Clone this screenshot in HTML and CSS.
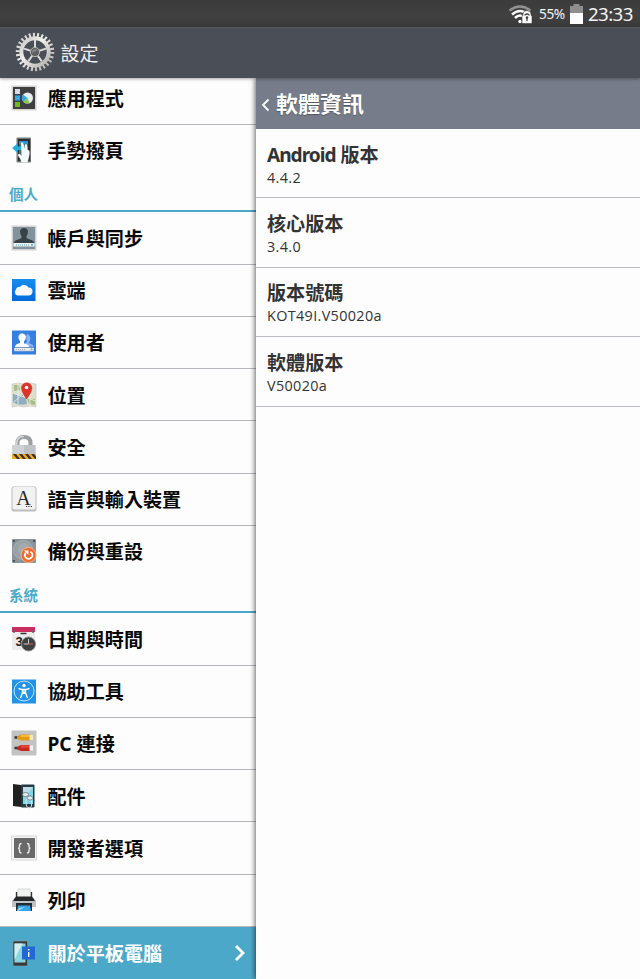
FILE: index.html
```html
<!DOCTYPE html>
<html lang="zh-Hant">

<head>
    <meta charset="UTF-8">
    <meta name="viewport" content="width=device-width, initial-scale=1.0">
    <title>設定</title>
    <link rel="stylesheet" href="styles.css">
</head>

<body>
    <div class="status-bar">
        <svg class="wifi" width="25" height="20" viewBox="0 0 25 20" fill="none">
            <path d="M1.5 5.5Q12 -2.5 22.5 5.5" stroke="#929292" stroke-width="2.4" />
            <path d="M4 9.5Q12 2.500 20 9.500M7 13Q12 8 17 13" stroke="#fff" stroke-width="2.5" />
            <circle cx="12" cy="16.5" r="1.7" fill="#fff" />
            <path d="M14 10.5h1V9a4 3.5 0 0 1 8 0v1.5h1v8H14z" fill="#fff" stroke="#3d3d3d" stroke-width=".6" />
            <path d="M17 10.500V10q2-2 4 0v.5M19 12v4" stroke="#444" stroke-width="1.3" />
            <circle cx="19" cy="12.5" r="1.3" fill="#444" />
        </svg>
        <span class="percent">55%</span>
        <svg class="battery" width="13" height="21" viewBox="0 0 13 21">
            <path d="M0 2h3.5V0h6v2H13v7H0z" fill="#8e8e8e" />
            <path d="M0 9h13v11H0z" fill="#fff" />
        </svg>
        <span class="clock">23:33</span>
    </div>

    <header class="app-bar">
        <svg class="gear" width="42" height="42" viewBox="0 0 42 42" fill="none">
            <defs>
                <linearGradient id="metal" x1="0" y1="0" x2="1" y2="1">
                    <stop offset="0" stop-color="#c4c4c2" />
                    <stop offset=".4" stop-color="#f1f0ed" />
                    <stop offset="1" stop-color="#aeada9" />
                </linearGradient>
            </defs>
            <g stroke="url(#metal)">
                <circle cx="21" cy="21" r="17" stroke-width="4.5" pathLength="52" stroke-dasharray=".95 1.05" />
                <circle cx="21" cy="21" r="13.7" stroke-width="4" />
                <path d="M21 20V9M21.5 21L32 17.6M21.5 21.5l6.300 8.900M20.500 21.500l-6.300 8.900M20.500 21L10 17.600" stroke-width="2" stroke="#dcdbd8" />
            </g>
            <circle cx="21" cy="21" r="4.600" fill="#5d5f62" stroke="#b9b8b5" stroke-width="1" />
            <path d="M18 22a3.300 3.300 0 0 1 5.500-3z" fill="#85878a" />
        </svg>
        <h1>設定</h1>
    </header>

    <main class="content">
        <nav class="sidebar">
            <ul class="menu">
                <li class="item">
                    <svg class="icon" viewBox="0 0 26 26">
                        <path d="M.5.5h25v25H.5z" fill="#d5d3d2" />
                        <path d="M2 2h22v22H2z" fill="#3f3f42" />
                        <path d="M4 4h5v5H4z" fill="#d8dbe5" />
                        <path d="M4 10.5h5v5H4z" fill="#32a9eb" />
                        <path d="M4 17h5v5H4z" fill="#6cbd18" />
                        <circle cx="16.5" cy="13" r="5.5" fill="#e5eef5" />
                        <path d="M16.5 13L12 9.500a5.500 5.500 0 0 0 .500 7.500z" fill="#36a9e4" />
                        <path d="M16.5 13l-4 4a5.500 5.500 0 0 0 6 1z" fill="#8ac849" />
                    </svg>
                    <span>應用程式</span>
                </li>
                <li class="item">
                    <svg class="icon" viewBox="0 0 26 26">
                        <rect x="5.5" y=".5" width="14.5" height="25" rx="1" fill="#777" />
                        <path d="M7 2h12v22H7z" fill="#292e30" />
                        <path d="M8 4h9v14H8z" fill="#456a77" />
                        <path d="M8 4h9v3H8z" fill="#2b91d0" />
                        <path d="M1 11l5-4v2.5h5v3.500H6v2.500z" fill="#22aee0" />
                        <path d="M10 6q1.500-1.500 2.300.500l1.500 5 .200-4q1.500-1 2 .500l.500 5q2.500-.500 2 4l-1 5-1 3.500h-6q-1-4-3.500-7-.500-2 1.500-1.500l2 1.500z" fill="#f5f9fa" stroke="#b4c5ca" stroke-width=".3" />
                    </svg>
                    <span>手勢撥頁</span>
                </li>
                <li class="section">個人</li>
                <li class="item">
                    <svg class="icon" viewBox="0 0 26 26">
                        <path d="M.5.5h25v25H.5z" fill="#d2d2d2" />
                        <path d="M2 2h22v22H2z" fill="#84939b" />
                        <path d="M2.500 18q1-3 6-4l2-1v-2Q9 9 9 6q1-3 4-3t4 3q0 3-1.500 5v2l2 1q5 1 6 4z" fill="#364247" />
                        <path d="M2.500 18h21v3.500h-21z" fill="#eef4f5" />
                        <path d="M5 20h13" stroke="#4c9abb" stroke-dasharray="1 1" />
                        <circle cx="21" cy="19.800" r="1" fill="#469abe" />
                    </svg>
                    <span>帳戶與同步</span>
                </li>
                <li class="item">
                    <svg class="icon" viewBox="0 0 26 26">
                        <defs>
                            <linearGradient id="blue" x2="0" y2="1">
                                <stop stop-color="#168ef0" />
                                <stop offset="1" stop-color="#0069dc" />
                            </linearGradient>
                        </defs>
                        <path d="M1 2h23.500v22H1z" fill="url(#blue)" />
                        <path d="M6.500 18.500a3.500 3.500 0 0 1-1.500-6 3 3 0 0 1 4-2.500 5 5 0 0 1 8.500.500 4 4 0 0 1 4 4q-.200 4-4 4z" fill="#f7f8f7" />
                    </svg>
                    <span>雲端</span>
                </li>
                <li class="item">
                    <svg class="icon" viewBox="0 0 26 26">
                        <path d="M1 1.500h24v24H1z" fill="#347fdf" />
                        <path d="M12 16q2-2 4-3-2-8 1-8 4 3 1 9l4 2 .500 2z" fill="#89b4fb" />
                        <path d="M4 18q0-3 5-4v-2q-2-2-1.500-5Q9 3.500 12 4.500t3 3q0 3-2 5v2q5 1 5.500 3.500z" fill="#fafdff" />
                        <rect x="3" y="18.500" width="20" height="3.700" rx="1" fill="#eee" stroke="#527ca7" stroke-width=".5" />
                        <path d="M5 20.500h10" stroke="#aaa" stroke-dasharray="1 1" />
                        <circle cx="20.500" cy="20.300" r="1" fill="#75aad2" />
                    </svg>
                    <span>使用者</span>
                </li>
                <li class="item">
                    <svg class="icon" viewBox="0 0 26 26">
                        <path d="M1 2l6-1 6 1 6-1 6 1v23l-6-1-6 1-6-1-6 1z" fill="#dfdecd" stroke="#bbb" stroke-width=".5" />
                        <path d="M2 11l6 3 4-2v10l-5 1-5-3z" fill="#8caec5" />
                        <path d="M3 3h5l1 5-6 1zM16 16l8 1v6l-6-1z" fill="#a6bd87" />
                        <path d="M10 14l5 2 1 6-5 1z" fill="#93adc0" />
                        <path d="M1 11l24 8M7 1v23M19 4v20M3 20L22 3" stroke="#f0f0df" stroke-width=".8" />
                        <path d="M15.500 17Q10.500 9.500 10.500 6a5.200 5.200 0 0 1 10.400 0q0 4-5.400 11z" fill="#df332a" stroke="#b82520" stroke-width=".5" />
                        <circle cx="15.500" cy="5.500" r="1.800" fill="#fff" />
                    </svg>
                    <span>位置</span>
                </li>
                <li class="item">
                    <svg class="icon" viewBox="0 0 26 26">
                        <path d="M6.500 13V9q0-6 6.500-6t6.500 6v4" fill="none" stroke="#9c9ea2" stroke-width="4" />
                        <path d="M5.800 12V9q0-6.500 7-6.500" fill="none" stroke="#d6d8da" stroke-width="1.500" />
                        <rect x="1" y="11" width="24" height="14" rx="1" fill="#cfd2d5" />
                        <path d="M13 11h11v9H13z" fill="#bec1c6" />
                        <path d="M1 20h24v5H1z" fill="#f4a91f" />
                        <path d="M2 20h3l4 5H6zM8 20h3l4 5h-3zM14 20h3l4 5h-3zM20 20h3l2 2.500V25h-1z" fill="#38332e" />
                    </svg>
                    <span>安全</span>
                </li>
                <li class="item">
                    <svg class="icon" viewBox="0 0 26 26">
                        <rect x=".5" y=".5" width="25" height="25" rx="2" fill="#bdbdbd" />
                        <rect x="1.500" y="1" width="23" height="22.500" rx="2" fill="#f2f2f2" />
                        <text class="key-letter" x="12.500" y="18.500" text-anchor="middle">A</text>
                        <path d="M15 20.500h6" stroke="#333" stroke-width="1.200" stroke-dasharray="1.200 1.200" />
                    </svg>
                    <span>語言與輸入裝置</span>
                </li>
                <li class="item">
                    <svg class="icon" viewBox="0 0 26 26">
                        <rect x="1" y="1" width="24" height="24" rx="1" fill="#8b9499" />
                        <circle cx="12" cy="12" r="9.500" fill="#98a1a6" stroke="#adb4b8" stroke-width=".8" />
                        <circle cx="13" cy="11" r="6" fill="#a3abaf" />
                        <path d="M2 2h2v2H2zM22 2h2v2h-2zM2 22h2v2H2z" fill="#4e575c" />
                        <circle cx="17.500" cy="17" r="7.500" fill="#ef6a2d" stroke="#f4b28e" />
                        <path d="M14.800 14.500a3.800 3.800 0 1 0 4.700-.800" fill="none" stroke="#fff" stroke-width="1.800" />
                        <path d="M13 12.500h4.500v4.500z" fill="#fff" />
                    </svg>
                    <span>備份與重設</span>
                </li>
                <li class="section">系統</li>
                <li class="item">
                    <svg class="icon" viewBox="0 0 26 26">
                        <path d="M1 2h23v22H1z" fill="#ececec" />
                        <path d="M1 1h23v5H1z" fill="#c92e61" />
                        <path d="M3 4v3M22 4v3" stroke="#666" stroke-width="1.500" />
                        <path d="M9.500 7.500h6" stroke="#333" stroke-width="1.500" />
                        <text class="date-number" x="4.500" y="19.500">3</text>
                        <circle cx="17.500" cy="18" r="7" fill="#3e4040" stroke="#8b8b8b" />
                        <path d="M17.500 13v5h-5" fill="none" stroke="#c9cccc" />
                        <path d="M17 18h5" stroke="#c46054" />
                    </svg>
                    <span>日期與時間</span>
                </li>
                <li class="item">
                    <svg class="icon" viewBox="0 0 26 26">
                        <path d="M1 1.500h24v24H1z" fill="#2293e5" />
                        <circle cx="13" cy="13" r="10" fill="none" stroke="#c4e5f8" />
                        <circle cx="13" cy="7.500" r="1.700" fill="#fff" />
                        <path d="M7.500 10.500l4 1.200v3L9.500 20M18.500 10.500l-4 1.200v3l2 5.300M12 11.500h2v3l-1 1-1-1z" fill="none" stroke="#fff" stroke-width="1.400" />
                    </svg>
                    <span>協助工具</span>
                </li>
                <li class="item">
                    <svg class="icon" viewBox="0 0 26 26">
                        <rect x=".5" y=".5" width="25" height="25" rx="1" fill="#c3c3c3" />
                        <path d="M3.500 7.500h4" stroke="#38322d" stroke-width="2.500" />
                        <path d="M6 6.500l4-2h9v6h-9l-4-1.500z" fill="#e09a14" />
                        <path d="M10 5h9v2h-9z" fill="#fbba35" />
                        <path d="M18.500 5H22v5h-3.500z" fill="#f4e6bb" />
                        <path d="M3.500 18h4" stroke="#38322d" stroke-width="2.500" />
                        <path d="M6 17l4-2h9v6h-9l-4-1.500z" fill="#c7261f" />
                        <path d="M10 15.500h9v2h-9z" fill="#ea493d" />
                        <path d="M18.500 15.500H22v5h-3.500z" fill="#eef3f4" />
                    </svg>
                    <span>PC 連接</span>
                </li>
                <li class="item">
                    <svg class="icon" viewBox="0 0 26 26">
                        <path d="M2 1l8 1v22l-8-1z" fill="#202121" />
                        <rect x="10" y="1.500" width="13.500" height="23" rx="1" fill="#273942" />
                        <path d="M12 4h10v17H12z" fill="#82d4e8" />
                        <path d="M12 4h10l-4 5-6 1z" fill="#bcdce9" />
                        <path d="M16.500 14q-3 5-1 9 3 4 5 0 1-4-1-7" fill="none" stroke="#dfe6e8" />
                        <ellipse cx="14.500" cy="11.500" rx="3" ry="2" fill="#e8ebec" stroke="#4e5c63" stroke-width=".6" />
                        <ellipse cx="19" cy="15" rx="3" ry="2" fill="#e8ebec" stroke="#4e5c63" stroke-width=".6" />
                    </svg>
                    <span>配件</span>
                </li>
                <li class="item">
                    <svg class="icon" viewBox="0 0 26 26">
                        <path d="M0 .5h26v25H0z" fill="#d4d5d5" />
                        <path d="M1 1.500h24v23H1z" fill="#f5f5f5" />
                        <path d="M3 3h21v20H3z" fill="#696969" />
                        <path d="M10.500 8.500q-2 0-2 2v1.200q0 1.500-1.500 1.500 1.500 0 1.500 1.500V16q0 2 2 2M16 8.500q2 0 2 2v1.200q0 1.500 1.500 1.500-1.500 0-1.500 1.500V16q0 2-2 2" fill="none" stroke="#eee" stroke-width="1.300" />
                    </svg>
                    <span>開發者選項</span>
                </li>
                <li class="item">
                    <svg class="icon" viewBox="0 0 26 26">
                        <path d="M7 2h12l1 9H6z" fill="#f0f1f1" stroke="#bbb" stroke-width=".5" />
                        <path d="M5.500 5v5M20.500 5v5" stroke="#333" stroke-width="1.300" />
                        <path d="M4 10h18l3 4v6H1v-6z" fill="#c0c3c6" />
                        <path d="M5 9.500h16l3 4.500H2z" fill="#262829" />
                        <path d="M5 16h16v8H5z" fill="#242c32" />
                        <path d="M7 18.500h12l1 5.500H6z" fill="#36a5ec" />
                        <path d="M8 21l6-1-7 4H6z" fill="#9cdcff" />
                    </svg>
                    <span>列印</span>
                </li>
                <li class="item selected">
                    <svg class="icon" viewBox="0 0 26 26">
                        <rect x="2" y="1" width="14.500" height="25" rx="1" fill="#373a3d" stroke="#929496" stroke-width=".7" />
                        <path d="M3.500 3.500h11v19h-11z" fill="#89d5df" />
                        <path d="M3.500 3.500h8l-8 16z" fill="#d1edf0" />
                        <path d="M11 6.500h13v13H11z" fill="#2168d5" />
                        <path d="M17.700 9v1.600M17.700 12v5" stroke="#fff" stroke-width="1.400" />
                    </svg>
                    <span>關於平板電腦</span>
                    <svg class="arrow" width="12" height="18" viewBox="0 0 12 18">
                        <path d="M2 2l7 7-7 7" fill="none" stroke="#fff" stroke-width="2.800" />
                    </svg>
                </li>
            </ul>
        </nav>

        <section class="detail">
            <div class="detail-header">
                <svg class="back" width="9" height="14" viewBox="0 0 9 14">
                    <path d="M7.500 1.500L2 7l5.500 5.500" fill="none" stroke="#fff" stroke-width="1.800" />
                </svg>
                <h2>軟體資訊</h2>
            </div>
            <dl class="info">
                <div class="info-row">
                    <dt><span class="latin">Android</span> 版本</dt>
                    <dd>4.4.2</dd>
                </div>
                <div class="info-row">
                    <dt>核心版本</dt>
                    <dd>3.4.0</dd>
                </div>
                <div class="info-row">
                    <dt>版本號碼</dt>
                    <dd>KOT49I.V50020a</dd>
                </div>
                <div class="info-row">
                    <dt>軟體版本</dt>
                    <dd>V50020a</dd>
                </div>
            </dl>
        </section>
    </main>
</body>

</html>
```
FILE: styles.css
```css
* {
    margin: 0;
    padding: 0;
    box-sizing: border-box;
}

body {
    height: 979px;
    display: flex;
    flex-direction: column;
    overflow: hidden;
    background-color: #fdfdfd;
    font-family: "Noto Sans", "Noto Sans CJK TC", sans-serif;
}

.status-bar {
    height: 27px;
    flex-shrink: 0;
    display: flex;
    align-items: center;
    justify-content: flex-end;
    padding-right: 7px;
    background: linear-gradient(#3b3b3b, #414141 60%, #393939);
    color: #f5f5f5;
    line-height: 27px;
}

.wifi {
    margin: 2px 6px 0 0;
}

.percent {
    width: 31px;
    font-size: 13.7px;
    letter-spacing: -0.4px;
}

.battery {
    margin: 2px 5px 0 0;
}

.clock {
    width: 45px;
    font-size: 18.7px;
    letter-spacing: -0.6px;
    white-space: nowrap;
}

.app-bar {
    height: 51px;
    flex-shrink: 0;
    display: flex;
    align-items: center;
    padding-left: 13.5px;
    border-top: 1px solid #565a5f;
    background-color: #4a4e57;
    color: #f0f0f0;
    position: relative;
    box-shadow: 0 1px 3px rgba(0, 0, 0, 0.35);
}

.gear {
    margin-right: 5px;
    margin-top: -3px;
}

.app-bar h1 {
    font-size: 19px;
    font-weight: 400;
}

.content {
    flex: 1;
    min-height: 0;
    display: flex;
}

.sidebar {
    width: 256px;
    overflow: hidden;
    background-color: #fdfdfd;
}

/* the list is scrolled a little, so the first row is cut off */
.menu {
    list-style: none;
    margin-top: -5.5px;
}

.item {
    height: 52.25px;
    display: flex;
    align-items: center;
    padding-left: 10.5px;
    border-bottom: 1px solid #b4b8bc;
    font-size: 19.1px;
    font-weight: 700;
    line-height: 28px;
    color: #090909;
}

.item span {
    padding-top: 2px;
}

.item:has(+ .section) {
    border-bottom-color: transparent;
}

.icon {
    width: 26px;
    height: 26px;
    flex-shrink: 0;
    margin-right: 11px;
}

.section {
    height: 35.25px;
    padding: 6px 0 0 9px;
    border-bottom: 2px solid #4aa6c6;
    font-size: 14.5px;
    font-weight: 700;
    line-height: 22px;
    color: #4dabca;
}

.selected {
    border-bottom: none;
    background-color: #4ca8c9;
    color: #fff;
}

.arrow {
    margin-left: auto;
    margin-right: 10px;
}

.key-letter {
    font-family: "Liberation Serif", serif;
    font-size: 20px;
    font-weight: 400;
    fill: #292929;
}

.date-number {
    font-family: "Liberation Sans", sans-serif;
    font-size: 13px;
    font-weight: 700;
    fill: #222;
}

.detail {
    flex: 1;
    background-color: #fdfdfd;
    box-shadow: -1px 0 5px rgba(0, 0, 0, 0.6);
}

.detail-header {
    height: 51px;
    display: flex;
    align-items: center;
    padding-left: 5px;
    background-color: #767c89;
    color: #fff;
}

.back {
    margin-right: 6px;
    margin-top: 2px;
}

.detail-header h2 {
    padding-bottom: 4px;
    font-size: 22px;
    font-weight: 700;
    text-shadow: 0 1px 1px rgba(0, 0, 0, 0.3);
}

.info-row {
    height: 69.4px;
    padding: 12.5px 11px 0;
    border-bottom: 1px solid #b9bdc1;
    color: #333;
}

.info-row dt {
    font-size: 19.1px;
    font-weight: 700;
    line-height: 26px;
}

.latin {
    letter-spacing: -1px;
}

.info-row dd {
    font-family: "Open Sans", sans-serif;
    font-size: 14.4px;
    letter-spacing: 0.35px;
    line-height: 20px;
}
```
